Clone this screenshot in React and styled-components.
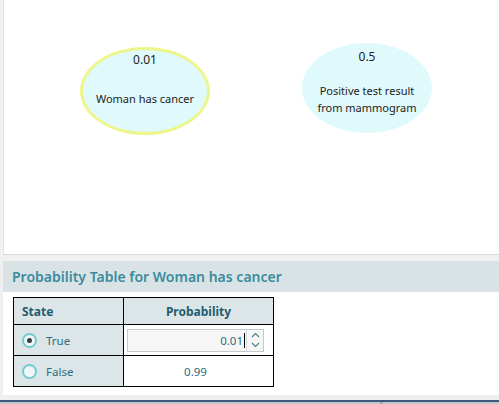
import styled, { createGlobalStyle } from "styled-components";

const Global = createGlobalStyle`
  html, body { margin: 0; padding: 0; }
  body {
    font-family: "Noto Sans", "Open Sans", sans-serif;
    background: #f0f0f0;
  }
`;

const nodes = [
  { id: "cancer", value: "0.01", label: "Woman has cancer", x: 76, y: 47, selected: true, gap: 22 },
  { id: "test", value: "0.5", label: "Positive test result\nfrom mammogram", x: 298, y: 43, selected: false, gap: 17 },
];

const rows = [
  { state: "True", value: "0.01", checked: true, editing: true },
  { state: "False", value: "0.99", checked: false, editing: false },
];

const App = () => {
  return (
    <>
      <Global />
      <Page>
        <Canvas>
          {nodes.map((n) => (
            <Node key={n.id} selected={n.selected} style={{ left: n.x, top: n.y }}>
              <NodeValue>{n.value}</NodeValue>
              <NodeLabel gap={n.gap}>{n.label}</NodeLabel>
            </Node>
          ))}
        </Canvas>
        <Panel>
          <PanelTitle>Probability Table for Woman has cancer</PanelTitle>
          <TableWrap>
            <Table>
              <thead>
                <tr>
                  <HeadCell width={110} align="left">State</HeadCell>
                  <HeadCell width={150} align="center">Probability</HeadCell>
                </tr>
              </thead>
              <tbody>
                {rows.map((r) => (
                  <tr key={r.state}>
                    <StateCell>
                      <StateInner>
                        <Radio checked={r.checked} />
                        {r.state}
                      </StateInner>
                    </StateCell>
                    <ValueCell>
                      {r.editing ? (
                        <Spin>
                          <SpinText>
                            {r.value}
                            <Caret />
                          </SpinText>
                          <SpinButtons>
                            <SpinButton>
                              <svg width="9" height="6" viewBox="0 0 9 6">
                                <path d="M1 5 L4.5 1.5 L8 5" fill="none" stroke="#4a7f90" strokeWidth="1.1" />
                              </svg>
                            </SpinButton>
                            <SpinButton>
                              <svg width="9" height="6" viewBox="0 0 9 6">
                                <path d="M1 1 L4.5 4.5 L8 1" fill="none" stroke="#4a7f90" strokeWidth="1.1" />
                              </svg>
                            </SpinButton>
                          </SpinButtons>
                        </Spin>
                      ) : (
                        r.value
                      )}
                    </ValueCell>
                  </tr>
                ))}
              </tbody>
            </Table>
          </TableWrap>
        </Panel>
        <StatusEdge>
          <Thumb />
        </StatusEdge>
      </Page>
    </>
  );
};

const Page = styled.div`
display: flex;
flex-direction: column;
width: 499px;
height: 404px;
overflow: hidden;
background: #f0f0f0;
`

const Canvas = styled.div`
position: relative;
flex: none;
height: 254px;
margin-left: 3px;
background: #ffffff;
border-left: 1px solid #e4e4e4;
border-bottom: 1px solid #dadada;
`

const Node = styled.div`
position: absolute;
box-sizing: border-box;
width: 130px;
height: ${({selected}) => selected ? 88 : 90}px;
border-radius: 50%;
background: #e0f9fb;
border: ${({selected}) => selected ? "3px solid #eef58a" : "none"};
display: flex;
flex-direction: column;
align-items: center;
padding-top: ${({selected}) => selected ? 2 : 6}px;
color: #1c1c1c;
font-size: 11px;
`

const NodeValue = styled.div`
font-size: 12px;
line-height: 16px;
`

const NodeLabel = styled.div`
margin-top: ${({gap}) => gap}px;
white-space: pre-line;
text-align: center;
line-height: 17px;
`

const Panel = styled.div`
flex: none;
height: 134px;
margin-top: 6px;
margin-left: 3px;
background: #ffffff;
`

const PanelTitle = styled.div`
height: 31px;
background: #d9e3e5;
color: #3b8b9e;
font-size: 14px;
font-weight: 600;
line-height: 31px;
padding-left: 9px;
`

const TableWrap = styled.div`
padding: 5px 10px 10px;
`

const Table = styled.table`
border-collapse: collapse;
table-layout: fixed;
font-size: 11.5px;
`

const HeadCell = styled.th`
box-sizing: border-box;
width: ${({width}) => width}px;
height: 27px;
padding: 0 0 0 8px;
text-align: ${({align}) => align};
background: #dce5e7;
border: 1px solid #000000;
color: #1e5d70;
font-weight: 700;
font-size: 12px;
${({align}) => align === "center" && `padding: 0;`}
`

const StateCell = styled.td`
height: 30px;
padding: 0 0 0 8px;
background: #dce5e7;
border: 1px solid #000000;
color: #2e6e80;
`

const StateInner = styled.div`
display: flex;
align-items: center;
gap: 9px;
`

const Radio = styled.span`
box-sizing: border-box;
width: 15px;
height: 15px;
border-radius: 50%;
border: 2px solid #72cccf;
background: #eef6f7;
display: flex;
align-items: center;
justify-content: center;

&::after {
  content: "";
  width: 5px;
  height: 5px;
  border-radius: 50%;
  background: ${({checked}) => checked ? "#3a3f44" : "transparent"};
}
`

const ValueCell = styled.td`
height: 30px;
padding: 0 9px 0 3px;
border: 1px solid #000000;
text-align: center;
color: #2a6a80;
`

const Spin = styled.div`
display: flex;
height: 23px;
box-sizing: border-box;
border: 1px solid #c4c9cc;
background: #f6f6f6;
`

const SpinText = styled.div`
flex: 1;
display: flex;
align-items: center;
justify-content: flex-end;
padding-right: 1px;
`

const Caret = styled.span`
width: 1px;
height: 15px;
margin-left: 1px;
background: #000000;
`

const SpinButtons = styled.div`
width: 16px;
display: flex;
flex-direction: column;
border-left: 1px solid #d8dcde;
`

const SpinButton = styled.div`
flex: 1;
display: flex;
align-items: center;
justify-content: center;
`

const StatusEdge = styled.div`
position: relative;
flex: none;
height: 2px;
margin-top: 5px;
border-top: 2px solid #3f5a7c;
background: #c6c6c6;
`

const Thumb = styled.span`
position: absolute;
left: 380px;
top: 0;
width: 3px;
height: 100%;
background: #a9a9a9;
`

export default App;
